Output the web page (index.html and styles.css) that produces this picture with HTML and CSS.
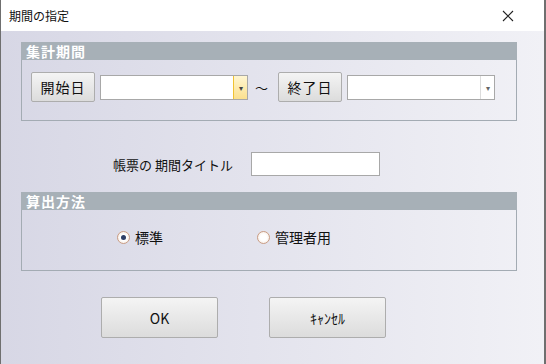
FILE: index.html
```html
<!DOCTYPE html>
<html lang="ja">
<head>
  <meta charset="UTF-8" />
  <title>期間の指定</title>
  <link rel="stylesheet" href="styles.css">
</head>
<body>
  <div class="window">
    <div class="titlebar">
      <span class="title">期間の指定</span>
      <svg class="close" width="12" height="12" viewBox="0 0 12 12">
        <path d="M1 1 L11 11 M11 1 L1 11" stroke="#222" stroke-width="1.1" fill="none" />
      </svg>
    </div>

    <div class="client">
      <div class="group">
        <div class="group-head">集計期間</div>
        <div class="group-body period-row">
          <button class="btn btn-day">開始日</button>
          <div class="combo">
            <span class="combo-text"></span>
            <span class="combo-drop active">&#9662;</span>
          </div>
          <span class="tilde">～</span>
          <button class="btn btn-day">終了日</button>
          <div class="combo">
            <span class="combo-text"></span>
            <span class="combo-drop">&#9662;</span>
          </div>
        </div>
      </div>

      <div class="title-row">
        <span class="title-label">帳票の 期間タイトル</span>
        <input class="text-input" type="text" />
      </div>

      <div class="group">
        <div class="group-head">算出方法</div>
        <div class="group-body radio-row">
          <label class="radio checked"><span class="dot"></span>標準</label>
          <label class="radio"><span class="dot"></span>管理者用</label>
        </div>
      </div>

      <div class="actions">
        <button class="btn btn-big">OK</button>
        <button class="btn btn-big">ｷｬﾝｾﾙ</button>
      </div>
    </div>
  </div>
</body>
</html>
```

FILE: styles.css
```css
* { box-sizing: border-box; }
body {
  margin: 0;
  font-family: "Noto Sans CJK JP", "Noto Sans", sans-serif;
  color: #111;
}
.window {
  width: 546px;
  height: 364px;
  display: flex;
  flex-direction: column;
  border-left: 1px solid #6f6f6f;
  border-right: 2px solid #6f6f6f;
}
.titlebar {
  height: 31px;
  background: #fff;
  display: flex;
  align-items: center;
  justify-content: space-between;
  padding: 0 30px 0 8px;
}
.title { font-size: 12px; }
.close { margin-top: 1px; }

.client {
  flex: 1;
  background: linear-gradient(to right, #d7d7e5, #f1f1f6);
  padding: 11px 0 0 20px;
}
.group { width: 496px; }
.group-head {
  height: 18px;
  background: #a7b0b7;
  color: #fff;
  font-weight: bold;
  font-size: 14px;
  line-height: 18px;
  padding-left: 5px;
  letter-spacing: 1px;
}
.group-body {
  height: 61px;
  border: 1px solid #a3abb3;
  border-top: none;
}

.period-row {
  display: flex;
  align-items: center;
  padding: 0 0 6px 9px;
}
.btn {
  font-family: inherit;
  color: #111;
  background: linear-gradient(#f4f4f4, #dcdcdc);
  border: 1px solid #adadad;
  border-radius: 2px;
  padding: 0;
}
.btn-day {
  width: 64px;
  height: 30px;
  font-size: 14px;
  letter-spacing: 1px;
}
.combo {
  width: 148px;
  height: 25px;
  margin-left: 5px;
  display: flex;
  background: #fff;
  border: 1px solid #a8a8a8;
}
.combo-text { flex: 1; }
.combo-drop {
  width: 14px;
  font-size: 8px;
  color: #666;
  display: flex;
  align-items: center;
  justify-content: center;
  border-left: 1px solid #dcdcdc;
}
.combo-drop.active {
  background: linear-gradient(#fff6d2, #fbe08e);
  border-left: 1px solid #f0c232;
  color: #444;
}
.tilde {
  font-size: 13px;
  margin: 0 10px 0 7px;
}

.title-row {
  display: flex;
  align-items: center;
  margin: 31px 0 16px 92px;
}
.title-label {
  font-size: 13px;
  width: 138px;
}
.text-input {
  width: 129px;
  height: 24px;
  border: 1px solid #a8a8a8;
  background: #fff;
  margin: 0;
}

.radio-row {
  display: flex;
  align-items: center;
  padding: 0 0 6px 95px;
}
.radio {
  display: flex;
  align-items: center;
  font-size: 14px;
  width: 140px;
}
.dot {
  width: 13px;
  height: 13px;
  border-radius: 50%;
  border: 1px solid #c99c84;
  background: radial-gradient(#fff 40%, #f2e4d8);
  margin-right: 5px;
  display: flex;
  align-items: center;
  justify-content: center;
}
.radio.checked .dot::after {
  content: "";
  width: 5px;
  height: 5px;
  border-radius: 50%;
  background: #2d3e66;
}

.actions {
  display: flex;
  gap: 51px;
  margin: 26px 0 0 80px;
}
.btn-big {
  width: 117px;
  height: 41px;
  font-size: 14px;
}
```
